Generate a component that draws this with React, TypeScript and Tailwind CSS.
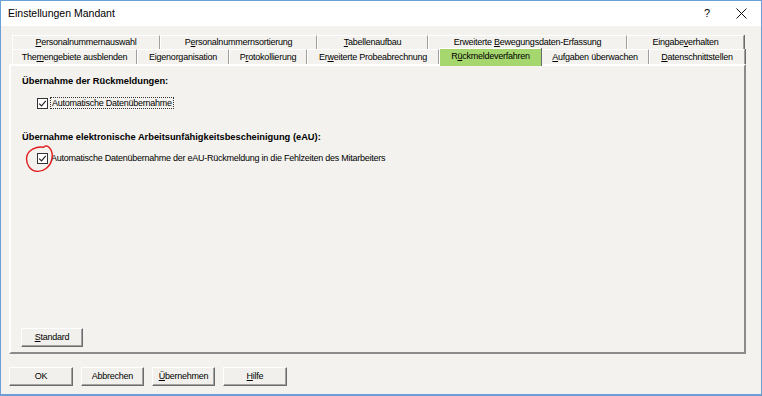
import type { ReactNode } from 'react'

const font = "font-['Liberation_Sans',Arial,sans-serif]"

function Mn({ text, i }: { text: string; i: number }) {
  if (i < 0) return <>{text}</>
  return (
    <>
      {text.slice(0, i)}
      <span className="underline underline-offset-[1px]">{text[i]}</span>
      {text.slice(i + 1)}
    </>
  )
}

interface TabProps {
  label: string
  u: number
  w: number
  h: number
  active?: boolean
}

function Tab({ label, u, w, h, active }: TabProps) {
  if (active) {
    return (
      <div
        className="relative z-10 -mt-[1px] flex h-[18px] shrink-0 items-center justify-center border-l border-t border-l-white border-t-white bg-[#a6d66e] pb-[2px] shadow-[1px_0_0_#6b6b6b]"
        style={{ width: w }}
      >
        <span className="tracking-[-0.25px]">
          <Mn text={label} i={u} />
        </span>
      </div>
    )
  }
  return (
    <div
      className="flex shrink-0 items-center justify-center border-l border-r border-t border-l-white border-r-[#a0a0a0] border-t-white shadow-[1px_0_0_#6b6b6b]"
      style={{ width: w, height: h }}
    >
      <span className="tracking-[-0.25px]">
        <Mn text={label} i={u} />
      </span>
    </div>
  )
}

function Check() {
  return (
    <span className="flex h-[11px] w-[11px] shrink-0 items-center justify-center border border-[#333] bg-white">
      <svg width="9" height="9" viewBox="0 0 9 9">
        <path d="M1.2 4.6 L3.5 6.9 L7.8 1.8" fill="none" stroke="#222" strokeWidth="1.1" />
      </svg>
    </span>
  )
}

function Btn({ children, w }: { children: ReactNode; w: number }) {
  return (
    <div
      className="flex h-[19px] shrink-0 items-center justify-center border border-b-[#6b6b6b] border-l-white border-r-[#6b6b6b] border-t-white bg-[#f1f0ec] shadow-[inset_-1px_-1px_0_#a3a3a3]"
      style={{ width: w }}
    >
      <span className="tracking-[-0.25px]">{children}</span>
    </div>
  )
}

const row1: TabProps[] = [
  { label: 'Personalnummernauswahl', u: 0, w: 148, h: 14 },
  { label: 'Personalnummernsortierung', u: 1, w: 157, h: 14 },
  { label: 'Tabellenaufbau', u: 0, w: 111, h: 14 },
  { label: 'Erweiterte Bewegungsdaten-Erfassung', u: 11, w: 199, h: 14 },
  { label: 'Eingabeverhalten', u: 7, w: 117, h: 14 },
]

const row2: TabProps[] = [
  { label: 'Themengebiete ausblenden', u: 3, w: 125, h: 15 },
  { label: 'Eigenorganisation', u: 2, w: 92, h: 15 },
  { label: 'Protokollierung', u: 1, w: 78, h: 15 },
  { label: 'Erweiterte Probeabrechnung', u: 2, w: 132, h: 15 },
  { label: 'Rückmeldeverfahren', u: 1, w: 102, h: 15, active: true },
  { label: 'Aufgaben überwachen', u: 0, w: 108, h: 15 },
  { label: 'Datenschnittstellen', u: 0, w: 96, h: 15 },
]

export default function App() {
  return (
    <div
      className={`${font} flex h-[396px] w-[762px] flex-col overflow-hidden border border-b-2 border-[#6c9fd6] bg-[#f3f2ee] text-[9px] leading-none text-black`}
    >
      {/* title bar */}
      <div className="flex h-[25px] shrink-0 items-center bg-white pl-[7px] pr-[14px]">
        <span className="text-[10.5px]">Einstellungen Mandant</span>
        <span className="ml-auto mr-[26px] text-[11px]">?</span>
        <svg width="11" height="11" viewBox="0 0 11 11">
          <path d="M0.5 0.5 L10.5 10.5 M10.5 0.5 L0.5 10.5" stroke="#111" strokeWidth="1" />
        </svg>
      </div>

      {/* tabs + page */}
      <div className="ml-[8px] mt-[9px] flex w-[737px] flex-col">
        <div className="flex pl-[3px]">
          {row1.map((t) => (
            <Tab key={t.label} {...t} />
          ))}
        </div>
        <div className="flex h-[15px] items-start pl-[3px]">
          {row2.map((t) => (
            <Tab key={t.label} {...t} />
          ))}
        </div>

        <div className="flex h-[290px] flex-col border-2 border-b-[#8a8a8a] border-l-white border-r-[#8a8a8a] border-t-white pl-[11px]">
          <div className="mt-[9px] h-[12px] text-[9.3px] font-bold leading-[12px]">Übernahme der Rückmeldungen:</div>
          <div className="ml-[15px] mt-[10px] flex h-[12px] items-center gap-[2px]">
            <Check />
            <span className="border border-dotted border-[#333] px-[1px] leading-[10px] tracking-[-0.25px]">
              Automatische Datenübernahme
            </span>
          </div>

          <div className="mt-[22px] h-[12px] text-[9.3px] font-bold leading-[12px]">
            Übernahme elektronische Arbeitsunfähigkeitsbescheinigung (eAU):
          </div>
          <div className="relative ml-[15px] mt-[9px] flex h-[12px] items-center gap-[3px]">
            <Check />
            <span className="tracking-[-0.25px]">
              Automatische Datenübernahme der eAU-Rückmeldung in die Fehlzeiten des Mitarbeiters
            </span>
            {/* red annotation circle */}
            <svg
              className="pointer-events-none absolute -left-[12px] -top-[7px]"
              width="30"
              height="28"
              viewBox="0 0 30 28"
            >
              <path
                d="M19 2.2 C11 1 2.5 5 1.6 12.5 C1 19 5 25.5 11.5 26.3 C18.5 27 25 22 26.8 14.5 C28 9 26.5 4.5 23.5 1.8 C22.5 1.1 21 0.8 19.8 1.2"
                fill="none"
                stroke="#e01b1b"
                strokeWidth="1.4"
                strokeLinecap="round"
              />
            </svg>
          </div>

          <div className="mb-[5px] ml-[-1px] mt-auto">
            <Btn w={62}>
              <Mn text="Standard" i={0} />
            </Btn>
          </div>
        </div>
      </div>

      {/* dialog buttons */}
      <div className="ml-[8px] mt-[13px] flex gap-[8px]">
        <Btn w={64}>OK</Btn>
        <Btn w={63}>Abbrechen</Btn>
        <Btn w={63}>
          <Mn text="Übernehmen" i={0} />
        </Btn>
        <Btn w={64}>
          <Mn text="Hilfe" i={0} />
        </Btn>
      </div>
    </div>
  )
}
